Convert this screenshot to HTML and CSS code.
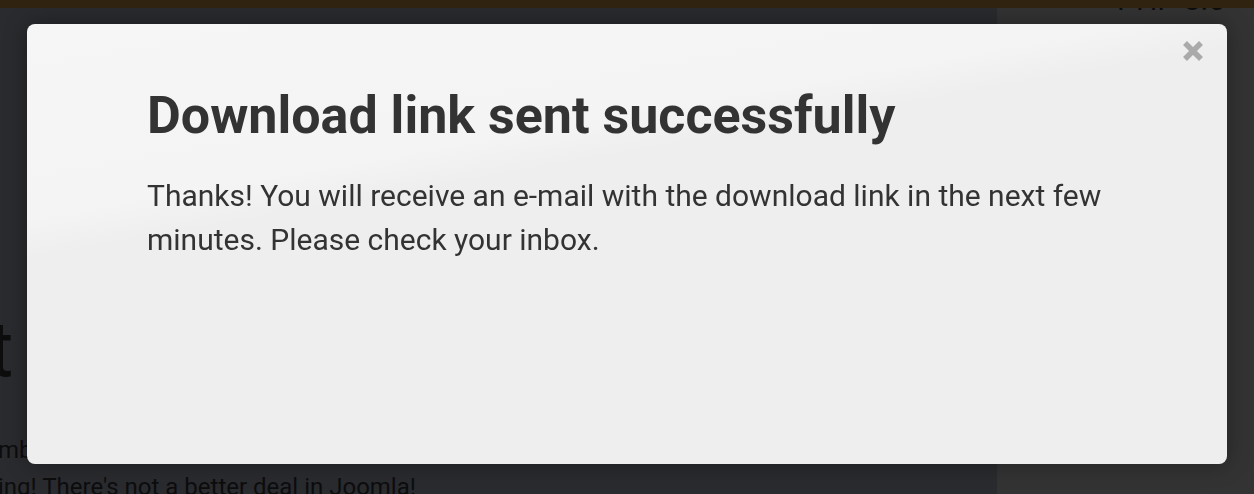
FILE: index.html
```html
<!DOCTYPE html>
<html lang="en">
  <head>
    <meta charset="UTF-8" />
    <meta name="viewport" content="width=device-width, initial-scale=1.0" />
    <title>Download link sent</title>
    <link rel="stylesheet" href="styles.css">
  </head>
  <body>
    <div class="topbar"></div>
    <div class="page">
      <div class="main">
        <div class="big">t</div>
        <p class="intro">mb<br>ing! There's not a better deal in Joomla!</p>
      </div>
      <div class="side">
        <div class="php">PHP 8.0</div>
      </div>
    </div>

    <!-- Modal -->
    <div class="overlay">
      <div class="modal">
        <button class="close" aria-label="Close">
          <svg width="22" height="22" viewBox="0 0 22 22">
            <path d="M3 3 L19 19 M19 3 L3 19" stroke="#aaa" stroke-width="5.5" />
          </svg>
        </button>
        <h2 class="title">Download link sent successfully</h2>
        <p class="text">Thanks! You will receive an e-mail with the download link in the next few minutes. Please check your inbox.</p>
      </div>
    </div>
  </body>
</html>
```

FILE: styles.css
```css
body {
  margin: 0;
  height: 494px;
  overflow: hidden;
  background-color: #2a2b2e;
  font-family: Roboto, "Liberation Sans", sans-serif;
  color: #111;
}

.topbar {
  position: relative;
  z-index: 1;
  height: 8px;
  background-color: #30230f;
}

.page {
  display: flex;
  height: 486px;
}

.main {
  flex: 0 0 997px;
  background-color: #2a2b2e;
  overflow: hidden;
}

.big {
  font-size: 78px;
  line-height: 80px;
  margin-top: 302px;
  margin-left: -12px;
  color: #0d0d0e;
}

.intro {
  font-size: 24px;
  line-height: 37px;
  margin: 42px 0 0 -2px;
  color: #0d0d0e;
}

.side {
  flex: 1;
  background-color: #333333;
}

.php {
  font-size: 30px;
  line-height: 30px;
  margin-top: -23px;
  margin-left: 120px;
  color: #0d0d0e;
}

/* Modal */
.overlay {
  position: fixed;
  inset: 0;
  padding: 24px 27px 30px 27px;
}

.modal {
  position: relative;
  box-sizing: border-box;
  width: 1200px;
  height: 440px;
  border-radius: 8px;
  padding: 60px 120px;
  background: linear-gradient(170deg, #f6f6f6 0%, #f4f4f4 30%, #eeeeee 36%, #eeeeee 100%);
  box-shadow: 0 0 22px rgba(0, 0, 0, 0.35);
  color: #333;
}

.close {
  position: absolute;
  top: 16px;
  right: 23px;
  border: 0;
  padding: 0;
  background: none;
  line-height: 0;
  cursor: pointer;
}

.title {
  margin: 0;
  font-size: 52px;
  font-weight: 700;
  line-height: 64px;
}

.text {
  margin: 26px 0 0 0;
  font-size: 30px;
  line-height: 44px;
}
```
